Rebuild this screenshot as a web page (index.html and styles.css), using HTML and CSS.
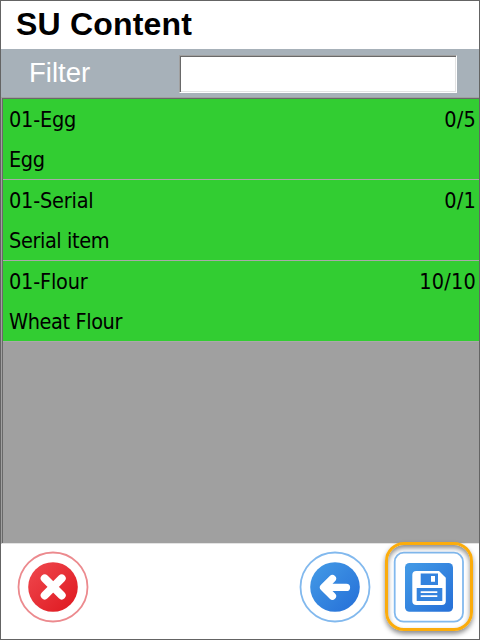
FILE: index.html
```html
<!DOCTYPE html>
<html lang="en">
<head>
<meta charset="utf-8">
<title>SU Content</title>
<link rel="stylesheet" href="styles.css">
</head>
<body>
<div class="window">
  <h1 class="title">SU Content</h1>
  <div class="filter">
    <label class="filter-label" for="filter">Filter</label>
    <input class="filter-input" id="filter" type="text">
  </div>
  <div class="list">
    <div class="item">
      <div class="line"><span>01-Egg</span><span class="qty">0/5</span></div>
      <div class="line name"><span>Egg</span></div>
    </div>
    <div class="item">
      <div class="line"><span>01-Serial</span><span class="qty">0/1</span></div>
      <div class="line name"><span>Serial item</span></div>
    </div>
    <div class="item">
      <div class="line"><span>01-Flour</span><span class="qty">10/10</span></div>
      <div class="line name"><span>Wheat Flour</span></div>
    </div>
  </div>
  <div class="footer">
    <svg class="btn" width="72" height="72" viewBox="0 0 72 72">
      <defs><linearGradient id="red" x1="0" y1="0" x2="1" y2="1"><stop offset="0.1" stop-color="#ee444a"/><stop offset="0.9" stop-color="#e01c23"/></linearGradient></defs>
      <circle cx="36" cy="36" r="34.5" fill="#fff" stroke="#ec8a8e" stroke-width="1.8"/>
      <circle cx="36" cy="36" r="24.8" fill="url(#red)"/>
      <path d="M27.7 27.4 44.7 44.4M44.7 27.4 27.7 44.4" stroke="#fff" stroke-width="8" stroke-linecap="round"/>
    </svg>
    <svg class="btn btn-back" width="72" height="72" viewBox="0 0 72 72">
      <defs><linearGradient id="blue" x1="0" y1="0" x2="1" y2="1"><stop offset="0.1" stop-color="#4197e5"/><stop offset="0.9" stop-color="#2873d9"/></linearGradient></defs>
      <circle cx="36" cy="36" r="34.5" fill="#fff" stroke="#82b9ee" stroke-width="1.8"/>
      <circle cx="36" cy="36" r="24.8" fill="url(#blue)"/>
      <path d="M33.4 27.6 24.6 36.4 33.4 45.2M26 36.4H47.4" fill="none" stroke="#fff" stroke-width="7.4" stroke-linecap="round" stroke-linejoin="round"/>
    </svg>
    <div class="save">
      <svg class="btn" width="72" height="72" viewBox="0 0 72 72">
        <rect x="2.7" y="1.7" width="68.3" height="69" rx="9" fill="none" stroke="#82b9ee" stroke-width="1.8"/>
        <rect x="13" y="12" width="48" height="48.7" rx="4.5" fill="url(#blue)"/>
        <path d="M24.3 20H47L53.8 26.8V50Q53.8 54 49.8 54H24.3Q20.3 54 20.3 50V24Q20.3 20 24.3 20Z" fill="#fff"/>
        <path d="M28.7 22.5H46V34H28.7ZM24.7 37H50.3V50H24.7Z" fill="#3483de"/>
        <path d="M39 25H43V30.7H39ZM28.7 40.2H45.3V42H28.7ZM28.7 44.3H45.3V46.1H28.7Z" fill="#fff"/>
      </svg>
      <div class="highlight"></div>
    </div>
  </div>
</div>
</body>
</html>
```

FILE: styles.css
```css
* { box-sizing: border-box; }
body { margin: 0; }
.window {
  width: 480px;
  height: 640px;
  border: 1px solid #646464;
  background: #fff;
  display: flex;
  flex-direction: column;
  font-family: "Liberation Sans", Arial, sans-serif;
}
.title {
  margin: 0;
  height: 48px;
  padding-left: 15px;
  font-size: 32px;
  letter-spacing: 0.2px;
  line-height: 46px;
  color: #000;
}
.filter {
  height: 48px;
  display: flex;
  align-items: flex-start;
  background: #a7b1b9;
}
.filter-label {
  width: 178px;
  padding-left: 28px;
  font-size: 27.5px;
  line-height: 47px;
  color: #fff;
}
.filter-input {
  width: 278px;
  height: 38px;
  margin: 6px 0 0;
  padding: 0;
  border: 1px solid;
  border-color: #a0a0a0 #fff #fff #a0a0a0;
  border-radius: 0;
  outline: none;
  background: #fff;
  box-shadow: inset 1px 1px #696969, inset -1px -1px #e3e3e3;
}
.list {
  height: 447px;
  border-top: 1px solid #a0a0a0;
  border-left: 1px solid #a0a0a0;
  border-bottom: 1px solid #e3e3e3;
  box-shadow: inset 1px 1px #696969;
  padding: 1px 0 0 1px;
  background: #a0a0a0;
  font-family: "DejaVu Sans Condensed", "DejaVu Sans", sans-serif;
  font-stretch: condensed;
  font-size: 21.5px;
  letter-spacing: -0.2px;
  color: #000;
}
.item {
  height: 81px;
  background: #32cd32;
  border-bottom: 1px solid #a9a9a9;
}
.line {
  height: 40px;
  padding: 0 3px 0 6px;
  display: flex;
  justify-content: space-between;
  line-height: 42px;
}
.name { letter-spacing: -0.4px; }
.qty { letter-spacing: 0.2px; }
.footer {
  flex: 1;
  display: flex;
  padding: 7px 0 0 16px;
}
.btn { display: block; }
.btn-back { margin-left: 210px; }
.save {
  position: relative;
  margin-left: 21px;
}
.highlight {
  position: absolute;
  left: -7px;
  top: -9px;
  width: 88px;
  height: 89px;
  border: 3px solid #fbac0c;
  border-radius: 19px;
  box-shadow: 0 3px 5px rgba(0, 0, 0, .45), inset 0 3px 5px rgba(0, 0, 0, .45);
}
```
